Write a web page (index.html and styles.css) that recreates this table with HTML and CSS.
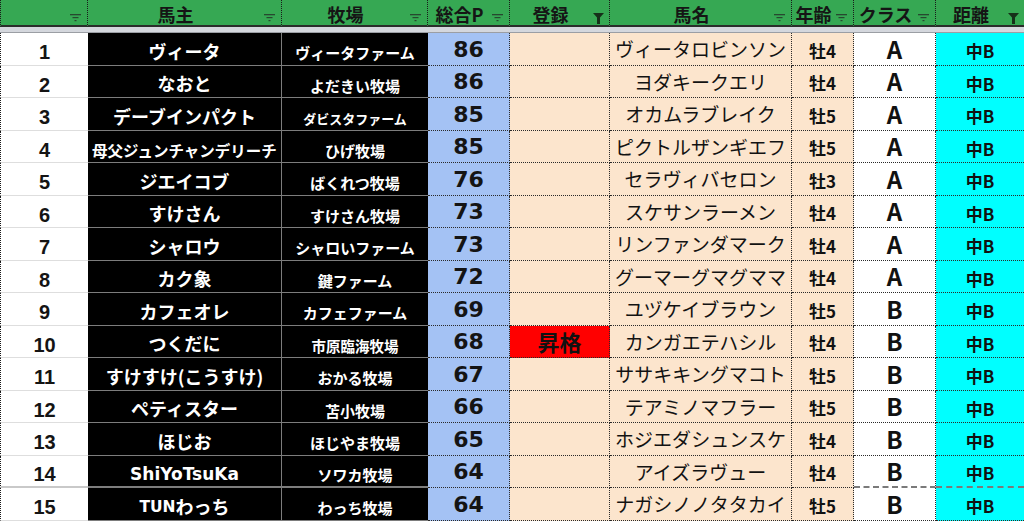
FILE: index.html
```html
<!DOCTYPE html>
<html lang="ja">
<head>
<meta charset="utf-8">
<title>ランキング</title>
<link rel="stylesheet" href="styles.css">
</head>
<body>
<div class="sheet">
  <div class="hd c-idx"><span class="ht"></span><svg class="fi" viewBox="0 0 11 8" width="11" height="8"><rect x="0" y="0" width="11" height="1.3"/><rect x="2.5" y="3" width="6" height="1.2"/><rect x="4.5" y="6" width="2" height="1.2"/></svg></div>
  <div class="hd c-own"><span class="ht">馬主</span><svg class="fi" viewBox="0 0 11 8" width="11" height="8"><rect x="0" y="0" width="11" height="1.3"/><rect x="2.5" y="3" width="6" height="1.2"/><rect x="4.5" y="6" width="2" height="1.2"/></svg></div>
  <div class="hd c-farm"><span class="ht">牧場</span><svg class="fi" viewBox="0 0 11 8" width="11" height="8"><rect x="0" y="0" width="11" height="1.3"/><rect x="2.5" y="3" width="6" height="1.2"/><rect x="4.5" y="6" width="2" height="1.2"/></svg></div>
  <div class="hd c-pts"><span class="ht">総合P</span><svg class="fi" viewBox="0 0 11 8" width="11" height="8"><rect x="0" y="0" width="11" height="1.3"/><rect x="2.5" y="3" width="6" height="1.2"/><rect x="4.5" y="6" width="2" height="1.2"/></svg></div>
  <div class="hd c-reg"><span class="ht">登録</span><svg class="ff" viewBox="0 0 11 11" width="11" height="11"><path d="M0 0H11L7 4.5V11H4V4.5Z"/></svg></div>
  <div class="hd c-name"><span class="ht">馬名</span><svg class="fi" viewBox="0 0 11 8" width="11" height="8"><rect x="0" y="0" width="11" height="1.3"/><rect x="2.5" y="3" width="6" height="1.2"/><rect x="4.5" y="6" width="2" height="1.2"/></svg></div>
  <div class="hd c-age"><span class="ht">年齢</span><svg class="fi" viewBox="0 0 11 8" width="11" height="8"><rect x="0" y="0" width="11" height="1.3"/><rect x="2.5" y="3" width="6" height="1.2"/><rect x="4.5" y="6" width="2" height="1.2"/></svg></div>
  <div class="hd c-cls"><span class="ht">クラス</span><svg class="fi" viewBox="0 0 11 8" width="11" height="8"><rect x="0" y="0" width="11" height="1.3"/><rect x="2.5" y="3" width="6" height="1.2"/><rect x="4.5" y="6" width="2" height="1.2"/></svg></div>
  <div class="hd c-dist last"><span class="ht">距離</span><svg class="ff" viewBox="0 0 11 11" width="11" height="11"><path d="M0 0H11L7 4.5V11H4V4.5Z"/></svg></div>

  <div class="freeze"></div>

  <div class="c idx">1</div><div class="c own">ヴィータ</div><div class="c farm">ヴィータファーム</div><div class="c pts">86</div><div class="c reg"></div><div class="c name">ヴィータロビンソン</div><div class="c age">牡4</div><div class="c cls">A</div><div class="c dist">中B</div>
  <div class="c idx">2</div><div class="c own">なおと</div><div class="c farm">よだきい牧場</div><div class="c pts">86</div><div class="c reg"></div><div class="c name">ヨダキークエリ</div><div class="c age">牡4</div><div class="c cls">A</div><div class="c dist">中B</div>
  <div class="c idx">3</div><div class="c own">デーブインパクト</div><div class="c farm xs">ダビスタファーム</div><div class="c pts">85</div><div class="c reg"></div><div class="c name">オカムラブレイク</div><div class="c age">牡5</div><div class="c cls">A</div><div class="c dist">中B</div>
  <div class="c idx">4</div><div class="c own sm">母父ジュンチャンデリーチ</div><div class="c farm">ひげ牧場</div><div class="c pts">85</div><div class="c reg"></div><div class="c name">ピクトルザンギエフ</div><div class="c age">牡5</div><div class="c cls">A</div><div class="c dist">中B</div>
  <div class="c idx">5</div><div class="c own">ジエイコブ</div><div class="c farm">ばくれつ牧場</div><div class="c pts">76</div><div class="c reg"></div><div class="c name">セラヴィバセロン</div><div class="c age">牡3</div><div class="c cls">A</div><div class="c dist">中B</div>
  <div class="c idx">6</div><div class="c own">すけさん</div><div class="c farm">すけさん牧場</div><div class="c pts">73</div><div class="c reg"></div><div class="c name">スケサンラーメン</div><div class="c age">牡4</div><div class="c cls">A</div><div class="c dist">中B</div>
  <div class="c idx">7</div><div class="c own">シャロウ</div><div class="c farm">シャロいファーム</div><div class="c pts">73</div><div class="c reg"></div><div class="c name">リンファンダマーク</div><div class="c age">牡4</div><div class="c cls">A</div><div class="c dist">中B</div>
  <div class="c idx">8</div><div class="c own">カク象</div><div class="c farm">鍵ファーム</div><div class="c pts">72</div><div class="c reg"></div><div class="c name">グーマーグマグママ</div><div class="c age">牡4</div><div class="c cls">A</div><div class="c dist">中B</div>
  <div class="c idx">9</div><div class="c own">カフェオレ</div><div class="c farm">カフェファーム</div><div class="c pts">69</div><div class="c reg"></div><div class="c name">ユヅケイブラウン</div><div class="c age">牡5</div><div class="c cls">B</div><div class="c dist">中B</div>
  <div class="c idx">10</div><div class="c own">つくだに</div><div class="c farm s14">市原臨海牧場</div><div class="c pts">68</div><div class="c reg up">昇格</div><div class="c name">カンガエテハシル</div><div class="c age">牡4</div><div class="c cls">B</div><div class="c dist">中B</div>
  <div class="c idx">11</div><div class="c own">すけすけ(こうすけ)</div><div class="c farm">おかる牧場</div><div class="c pts">67</div><div class="c reg"></div><div class="c name">ササキキングマコト</div><div class="c age">牡5</div><div class="c cls">B</div><div class="c dist">中B</div>
  <div class="c idx">12</div><div class="c own">ペティスター</div><div class="c farm">苫小牧場</div><div class="c pts">66</div><div class="c reg"></div><div class="c name">テアミノマフラー</div><div class="c age">牡5</div><div class="c cls">B</div><div class="c dist">中B</div>
  <div class="c idx">13</div><div class="c own">ほじお</div><div class="c farm">ほじやま牧場</div><div class="c pts">65</div><div class="c reg"></div><div class="c name">ホジエダシュンスケ</div><div class="c age">牡4</div><div class="c cls">B</div><div class="c dist">中B</div>
  <div class="c idx thick">14</div><div class="c own lat thick">ShiYoTsuKa</div><div class="c farm thick">ソワカ牧場</div><div class="c pts">64</div><div class="c reg"></div><div class="c name">アイズラヴュー</div><div class="c age">牡4</div><div class="c cls thick">B</div><div class="c dist thick">中B</div>
  <div class="c idx">15</div><div class="c own"><span class="latin">TUN</span>わっち</div><div class="c farm">わっち牧場</div><div class="c pts">64</div><div class="c reg"></div><div class="c name">ナガシノノタタカイ</div><div class="c age">牡5</div><div class="c cls">B</div><div class="c dist">中B</div>
</div>
</body>
</html>
```

FILE: styles.css
```css
* { box-sizing: border-box; }

html, body {
  margin: 0;
  padding: 0;
  background: #ffffff;
  overflow: hidden;
}

body {
  font-family: "Noto Sans CJK JP", "Noto Sans", sans-serif;
  color: #111;
}

.sheet {
  display: grid;
  grid-template-columns: 88px 194px 146px 82px 100px 182px 62px 82px 88px;
  grid-template-rows: 27px 6px;
  grid-auto-rows: 32.5px;
  width: 1024px;
}

/* header */
.hd {
  position: relative;
  background: #36a853;
  border-right: 1px dotted #1a1a1a;
  border-bottom: 2px solid #2b2d2b;
  display: flex;
  align-items: center;
  justify-content: center;
  padding: 3px 18px 0 0;
  font-weight: 700;
  font-size: 18px;
  line-height: 1;
  color: #151515;
  white-space: nowrap;
}
.hd.c-idx { border-left: 1px dotted #1a1a1a; }
.hd.last { border-right: none; }

.fi {
  position: absolute;
  right: 6px;
  top: 14px;
  fill: #27482f;
}
.ff {
  position: absolute;
  right: 5px;
  top: 13px;
  fill: #163019;
}

.freeze {
  grid-column: 1 / -1;
  align-self: start;
  background: #d4d7dd;
  border-bottom: 1px solid #9b9ea4;
  height: 6px;
}

/* cells */
.c {
  display: flex;
  align-items: center;
  justify-content: center;
  line-height: 1.2;
  white-space: nowrap;
}

.idx {
  background: #fff;
  border-left: 1px dotted #1a1a1a;
  border-bottom: 1px solid #dedede;
  font-family: "Liberation Sans", "Noto Sans CJK JP", sans-serif;
  font-weight: 700;
  font-size: 20px;
  padding-top: 7px;
  color: #141414;
}
.idx.thick { border-bottom: 2px solid #c9c9c9; }

.own, .farm {
  background: #000;
  color: #fff;
  font-weight: 700;
  border-bottom: 1px solid #7d7d7d;
}
.own.thick, .farm.thick { border-bottom: 2px solid #7d7d7d; }
.own {
  border-right: 1px solid #7d7d7d;
  font-size: 18px;
  padding-top: 6px;
}
.own.sm { font-size: 15.5px; padding-top: 8px; }
.own.lat { font-family: "DejaVu Sans", "Noto Sans CJK JP", sans-serif; font-size: 17px; padding-top: 6px; }
.own .latin { font-family: "DejaVu Sans", sans-serif; font-size: 15.5px; padding-top: 1px; }

.farm {
  font-size: 15px;
  padding-top: 9px;
}
.farm.xs { font-size: 13px; padding-top: 11px; }
.farm.s14 { font-size: 14.5px; }

.pts {
  background: #a4c2f4;
  border-bottom: 1px dotted #2a2a2a;
  border-right: 1px dotted #2a2a2a;
  font-family: "DejaVu Sans", sans-serif;
  font-weight: 700;
  font-size: 22px;
  padding-top: 2px;
  color: #141414;
}

.reg {
  background: #fce5cd;
  border-bottom: 1px dotted #2a2a2a;
  border-right: 1px dotted #2a2a2a;
  font-weight: 700;
  font-size: 22px;
}
.reg.up { background: #ff0000; color: #111; }

.name {
  background: #fce5cd;
  border-bottom: 1px dotted #2a2a2a;
  border-right: 1px dotted #2a2a2a;
  font-size: 19px;
  font-weight: 400;
  padding-top: 2px;
  color: #121212;
}

.age {
  background: #fce5cd;
  border-bottom: 1px dotted #2a2a2a;
  border-right: 1px dotted #2a2a2a;
  font-size: 17px;
  font-weight: 700;
  padding-top: 4px;
}

.cls {
  background: #fff;
  border-bottom: 1px dotted #2a2a2a;
  border-right: 1px dotted #2a2a2a;
  font-size: 24px;
  font-weight: 700;
  padding-top: 1px;
  color: #111;
}
.cls.thick, .dist.thick { border-bottom: 2px dashed #7a7a7a; }

.dist {
  background: #00ffff;
  border-bottom: 1px dotted #2a2a2a;
  font-size: 17px;
  font-weight: 700;
  padding-top: 5px;
}
```
